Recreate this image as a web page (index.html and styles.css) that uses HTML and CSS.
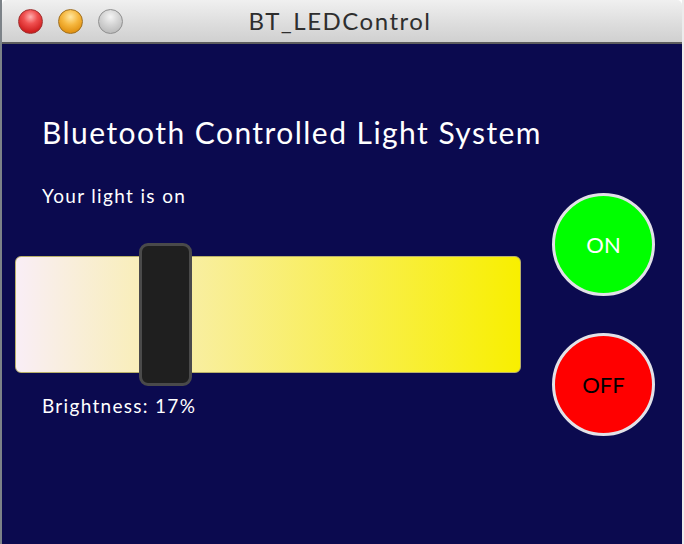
FILE: index.html
```html
<!DOCTYPE html>
<html>
<head>
<meta charset="utf-8">
<title>BT_LEDControl</title>
<link rel="stylesheet" href="styles.css">
</head>
<body>
<div class="window">
  <div class="titlebar">
    <div class="lights">
      <span class="light red"></span>
      <span class="light yellow"></span>
      <span class="light gray"></span>
    </div>
    <div class="title">BT_LEDControl</div>
  </div>
  <div class="content">
    <div class="left">
      <h1 class="heading">Bluetooth Controlled Light System</h1>
      <p class="status">Your light is on</p>
      <div class="slider">
        <div class="track"></div>
        <div class="thumb" style="left: 124px;"></div>
      </div>
      <p class="brightness">Brightness: 17%</p>
    </div>
    <div class="right">
      <button class="round on">ON</button>
      <button class="round off">OFF</button>
    </div>
  </div>
</div>
</body>
</html>
```
FILE: styles.css
```css
html, body {
  margin: 0;
  padding: 0;
  background: #ffffff;
}

.window {
  width: 684px;
  height: 544px;
  display: flex;
  flex-direction: column;
  box-sizing: border-box;
  border-left: 2px solid #7c8288;
  border-right: 2px solid #ececec;
  overflow: hidden;
}

.titlebar {
  height: 42px;
  flex: 0 0 42px;
  position: relative;
  display: flex;
  align-items: center;
  justify-content: center;
  background: linear-gradient(to bottom, #f0f0f0 0%, #dcdcdc 60%, #d0d0d0 100%);
  border-bottom: 2px solid #5e5e5e;
  border-top-left-radius: 5px;
  border-top-right-radius: 5px;
}

.lights {
  position: absolute;
  left: 16px;
  top: 9px;
  display: flex;
  gap: 15px;
}

.light {
  width: 25px;
  height: 25px;
  border-radius: 50%;
  box-sizing: border-box;
}

.light.red {
  background: radial-gradient(circle at 50% 30%, #ffb0b0 0%, #f05050 35%, #d02020 75%, #b01010 100%);
  border: 1px solid #a03030;
}

.light.yellow {
  background: radial-gradient(circle at 50% 30%, #ffe7a0 0%, #f6b840 40%, #e09010 80%, #c07000 100%);
  border: 1px solid #a07020;
}

.light.gray {
  background: radial-gradient(circle at 50% 30%, #f4f4f4 0%, #d6d6d6 40%, #b8b8b8 85%, #a8a8a8 100%);
  border: 1px solid #909090;
}

.title {
  font-family: "Lato", "Open Sans", sans-serif;
  font-size: 24px;
  letter-spacing: 1.5px;
  color: #2e2e2e;
  line-height: 42px;
  margin-right: 4px;
}

.content {
  flex: 1;
  background: #0b0a4f;
  display: flex;
  padding-left: 13px;
}

.left {
  width: 506px;
  padding-top: 70px;
  display: flex;
  flex-direction: column;
}

.heading {
  margin: 0 0 0 27px;
  font-family: "Lato", "Open Sans", sans-serif;
  font-weight: normal;
  font-size: 30px;
  letter-spacing: 1.45px;
  line-height: 36px;
  color: #ffffff;
  white-space: nowrap;
}

.status {
  margin: 34px 0 0 27px;
  font-family: "Lato", "Open Sans", sans-serif;
  font-size: 19px;
  letter-spacing: 1.35px;
  line-height: 24px;
  color: #ffffff;
}

.slider {
  position: relative;
  margin-top: 35px;
  height: 143px;
}

.track {
  margin-top: 13px;
  height: 117px;
  box-sizing: border-box;
  border-radius: 6px;
  border: 1px solid #b8b06a;
  background: linear-gradient(to right, #f9eef6 0%, #f8ef00 100%);
}

.thumb {
  position: absolute;
  top: 0;
  width: 53px;
  height: 143px;
  box-sizing: border-box;
  border: 3px solid #4a4a4a;
  border-radius: 9px;
  background: #1f1f1f;
}

.brightness {
  margin: 8px 0 0 27px;
  font-family: "Lato", "Open Sans", sans-serif;
  font-size: 19px;
  letter-spacing: 1.3px;
  line-height: 24px;
  color: #ffffff;
}

.right {
  margin-left: 31px;
  padding-top: 149px;
  display: flex;
  flex-direction: column;
  gap: 37px;
}

.round {
  width: 103px;
  height: 103px;
  border-radius: 50%;
  box-sizing: border-box;
  border: 3px solid #e2e2e8;
  font-family: "Lato", "Open Sans", sans-serif;
  font-size: 22px;
  padding: 0;
  display: flex;
  align-items: center;
  justify-content: center;
}

.round.on {
  background: #00ff00;
  color: #ffffff;
}

.round.off {
  background: #ff0000;
  color: #000000;
}
```
